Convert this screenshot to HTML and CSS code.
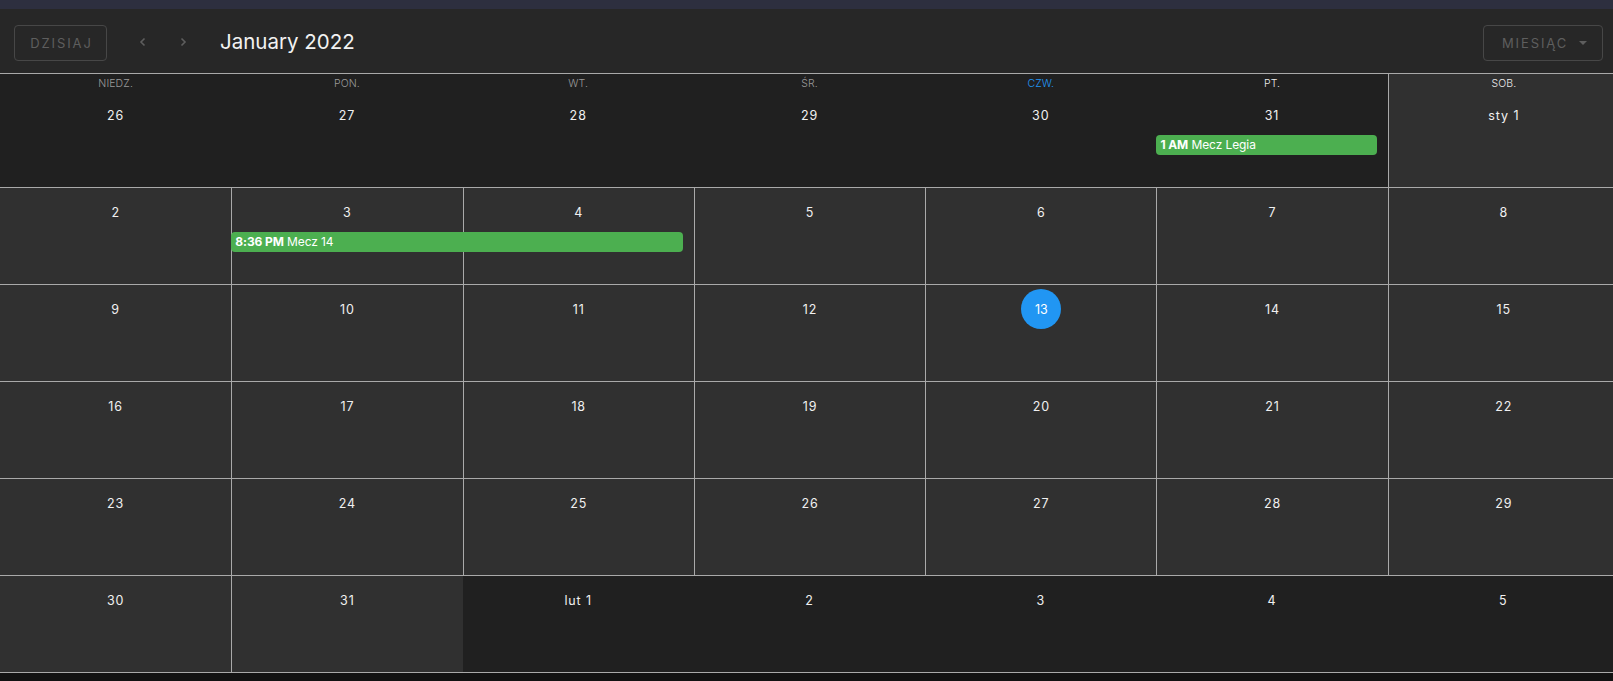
FILE: index.html
```html
<!DOCTYPE html>
<html lang="pl">
<head>
<meta charset="utf-8">
<title>Kalendarz</title>
<link rel="stylesheet" href="styles.css">
</head>
<body>
<div class="topbar"></div>
<header class="toolbar">
  <button class="btn-outline today">DZISIAJ</button>
  <button class="nav-btn" aria-label="poprzedni"><svg width="8" height="10" viewBox="0 0 8 10"><path d="M5.5 1.5 L2 5 L5.5 8.5" fill="none" stroke="#5e5e5e" stroke-width="1.6"/></svg></button>
  <button class="nav-btn" aria-label="następny"><svg width="8" height="10" viewBox="0 0 8 10"><path d="M2.5 1.5 L6 5 L2.5 8.5" fill="none" stroke="#5e5e5e" stroke-width="1.6"/></svg></button>
  <h1 class="title">January 2022</h1>
  <div class="spacer"></div>
  <button class="btn-outline view">MIESIĄC <svg class="caret" width="10" height="6" viewBox="0 0 10 6"><path d="M1 1 L5 5 L9 1 Z" fill="#5e5e5e"/></svg></button>
</header>
<main class="calendar">
  <div class="week first">
    <div class="cell out c1"><span class="wd past">NIEDZ.</span><span class="date">26</span></div>
    <div class="cell out c2"><span class="wd past">PON.</span><span class="date">27</span></div>
    <div class="cell out c3"><span class="wd past">WT.</span><span class="date">28</span></div>
    <div class="cell out c4"><span class="wd past">ŚR.</span><span class="date">29</span></div>
    <div class="cell out c5"><span class="wd now">CZW.</span><span class="date">30</span></div>
    <div class="cell out c6"><span class="wd">PT.</span><span class="date">31</span></div>
    <div class="cell in c7"><span class="wd">SOB.</span><span class="date">sty 1</span></div>
    <div class="event" style="grid-column: 6 / span 1"><b>1 AM</b> Mecz Legia</div>
  </div>
  <div class="week">
    <div class="cell in c1"><span class="date">2</span></div>
    <div class="cell in c2"><span class="date">3</span></div>
    <div class="cell in c3"><span class="date">4</span></div>
    <div class="cell in c4"><span class="date">5</span></div>
    <div class="cell in c5"><span class="date">6</span></div>
    <div class="cell in c6"><span class="date">7</span></div>
    <div class="cell in c7"><span class="date">8</span></div>
    <div class="event" style="grid-column: 2 / span 2"><b>8:36 PM</b> Mecz 14</div>
  </div>
  <div class="week">
    <div class="cell in c1"><span class="date">9</span></div>
    <div class="cell in c2"><span class="date">10</span></div>
    <div class="cell in c3"><span class="date">11</span></div>
    <div class="cell in c4"><span class="date">12</span></div>
    <div class="cell in c5"><span class="date today-date">13</span></div>
    <div class="cell in c6"><span class="date">14</span></div>
    <div class="cell in c7"><span class="date">15</span></div>
  </div>
  <div class="week">
    <div class="cell in c1"><span class="date">16</span></div>
    <div class="cell in c2"><span class="date">17</span></div>
    <div class="cell in c3"><span class="date">18</span></div>
    <div class="cell in c4"><span class="date">19</span></div>
    <div class="cell in c5"><span class="date">20</span></div>
    <div class="cell in c6"><span class="date">21</span></div>
    <div class="cell in c7"><span class="date">22</span></div>
  </div>
  <div class="week">
    <div class="cell in c1"><span class="date">23</span></div>
    <div class="cell in c2"><span class="date">24</span></div>
    <div class="cell in c3"><span class="date">25</span></div>
    <div class="cell in c4"><span class="date">26</span></div>
    <div class="cell in c5"><span class="date">27</span></div>
    <div class="cell in c6"><span class="date">28</span></div>
    <div class="cell in c7"><span class="date">29</span></div>
  </div>
  <div class="week">
    <div class="cell in c1"><span class="date">30</span></div>
    <div class="cell in c2"><span class="date">31</span></div>
    <div class="cell out c3"><span class="date">lut 1</span></div>
    <div class="cell out c4"><span class="date">2</span></div>
    <div class="cell out c5"><span class="date">3</span></div>
    <div class="cell out c6"><span class="date">4</span></div>
    <div class="cell out c7"><span class="date">5</span></div>
  </div>
</main>
</body>
</html>
```
FILE: styles.css
```css
* { box-sizing: border-box; }
html, body {
  margin: 0;
  padding: 0;
  overflow: hidden;
  background: #121212;
  font-family: "Inter", "Noto Sans", "DejaVu Sans", sans-serif;
  color: #e6e6e6;
}
body { width: 1613px; height: 681px; }

.topbar { height: 9px; background: #2d2f3f; }

.toolbar {
  height: 64px;
  background: #272727;
  display: flex;
  align-items: center;
  padding: 0 10px 0 14px;
}
.btn-outline {
  height: 36px;
  border: 1px solid #474747;
  border-radius: 4px;
  background: transparent;
  color: #5e5e5e;
  font-family: inherit;
  font-size: 13px;
  letter-spacing: 1.9px;
  font-weight: 400;
  display: flex;
  align-items: center;
  justify-content: center;
  padding: 0;
  margin-top: 4px;
}
.today { width: 93px; margin-right: 16px; padding-left: 2px; }
.nav-btn {
  width: 40px;
  height: 36px;
  background: transparent;
  border: 0;
  padding: 0;
  display: flex;
  align-items: center;
  justify-content: center;
  margin-top: 1px;
}
.title {
  margin: 0 0 0 17px;
  font-size: 20.5px;
  font-weight: 400;
  color: #f2f2f2;
  letter-spacing: 0;
}
.spacer { flex: 1; }
.view { width: 120px; gap: 10px; padding-left: 4px; }
.caret { display: block; }

.calendar {
  width: 1619px;
  border-top: 1px solid #a9a9a9;
}
.week {
  display: grid;
  grid-template-columns: repeat(7, 1fr);
  grid-template-rows: 44px 20px 1fr;
  height: 97px;
  border-bottom: 1px solid #a9a9a9;
}
.week.first {
  grid-template-rows: 61px 20px 1fr;
  height: 114px;
}
.cell {
  grid-row: 1 / -1;
  display: flex;
  flex-direction: column;
  align-items: center;
}
.c1 { grid-column: 1; }
.c2 { grid-column: 2; }
.c3 { grid-column: 3; }
.c4 { grid-column: 4; }
.c5 { grid-column: 5; }
.c6 { grid-column: 6; }
.c7 { grid-column: 7; }
.cell.out { background: #202020; }
.cell.in { background: #303030; }
.cell.in:not(.c1) { border-left: 1px solid #a9a9a9; }

.wd {
  height: 17px;
  line-height: 19px;
  font-size: 10.5px;
  font-weight: 300;
  color: #eaeaea;
  letter-spacing: 0.1px;
}
.wd.past { color: #9a9a9a; }
.wd.now { color: #2196f3; }

.date {
  margin-top: 4px;
  height: 40px;
  min-width: 40px;
  line-height: 41px;
  text-align: center;
  font-size: 12.5px;
  font-weight: 400;
  letter-spacing: 0.9px;
  color: #f0f0f0;
}
.today-date {
  width: 40px;
  border-radius: 50%;
  background: #2196f3;
  color: #ffffff;
  letter-spacing: 0;
}

.event {
  grid-row: 2;
  margin-right: 11px;
  height: 20px;
  line-height: 20px;
  background: #4caf50;
  border-radius: 4px;
  color: #ffffff;
  font-size: 12px;
  padding-left: 4px;
  white-space: nowrap;
  overflow: hidden;
  letter-spacing: -0.1px;
  z-index: 1;
}
.event b { font-weight: 700; }
```
